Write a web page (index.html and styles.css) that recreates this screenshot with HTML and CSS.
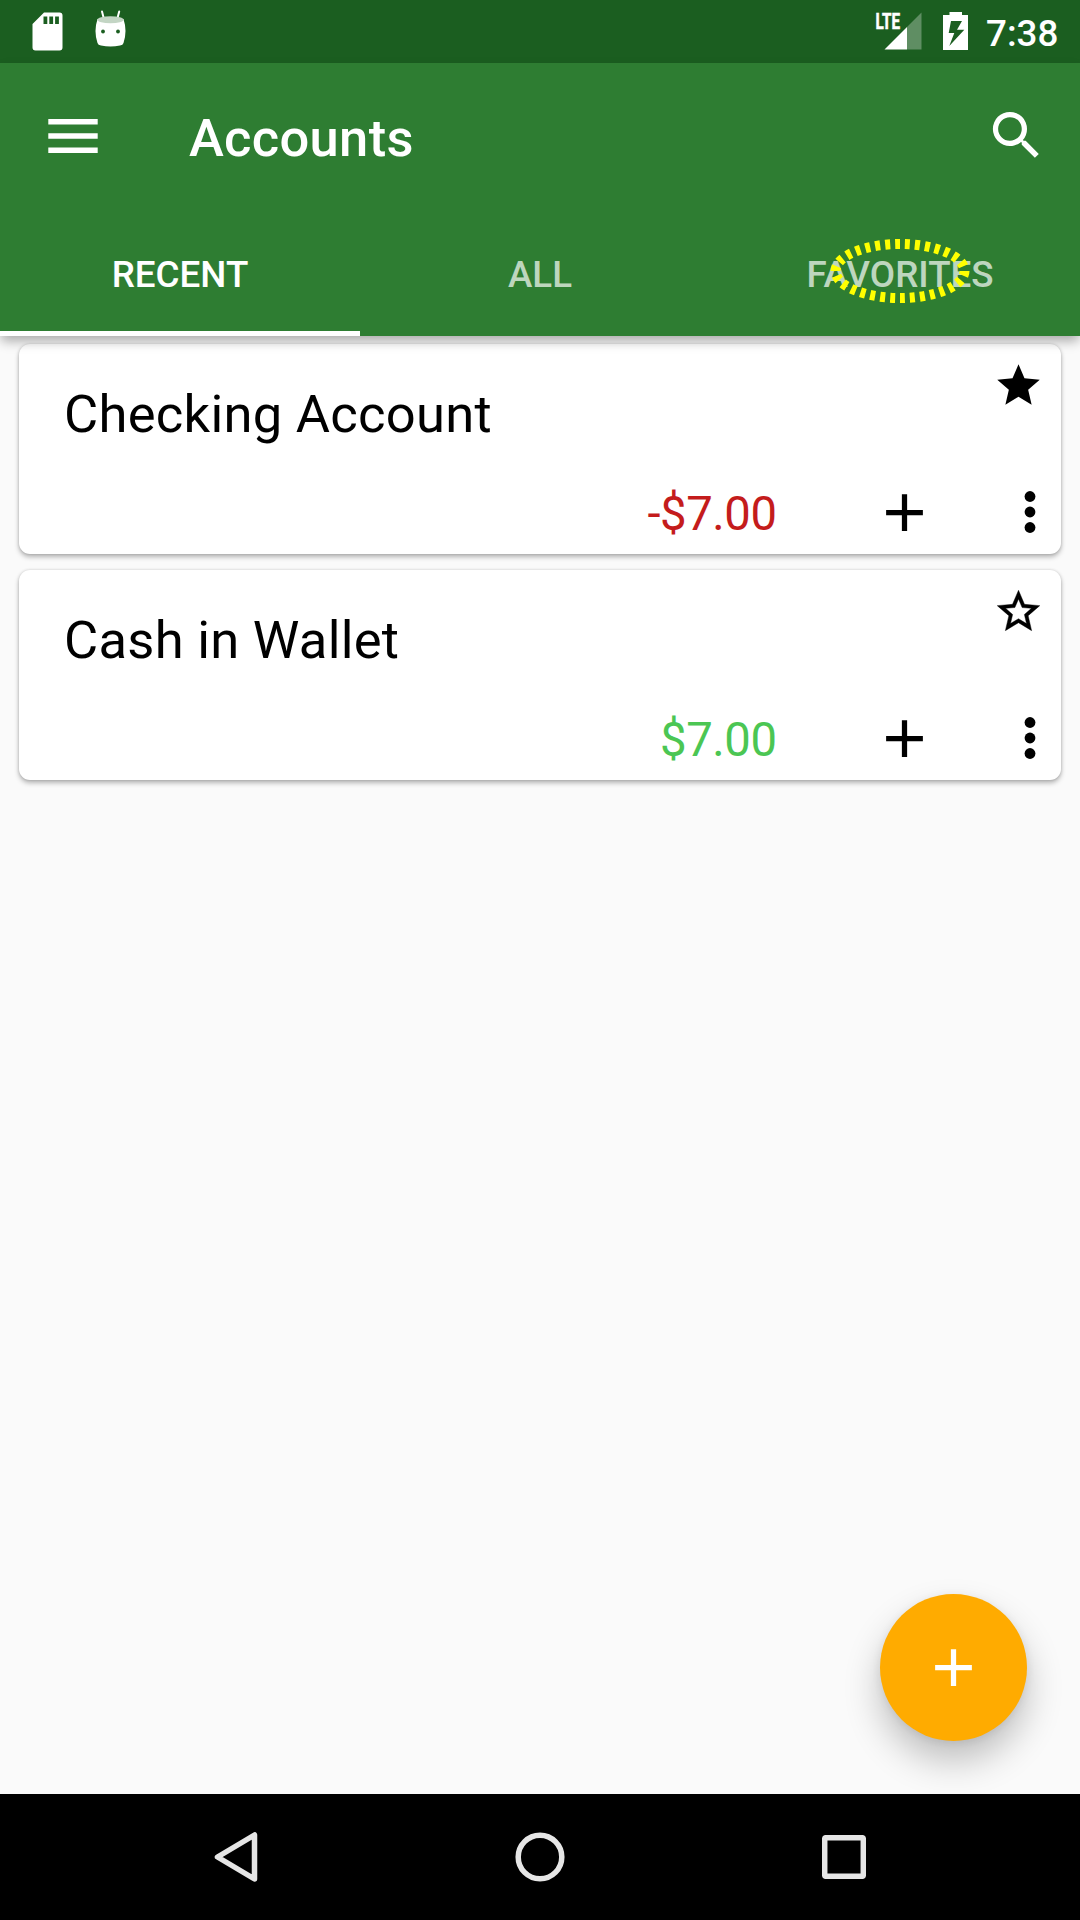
FILE: index.html
```html
<!DOCTYPE html>
<html lang="en">
<head>
<meta charset="utf-8">
<title>Accounts</title>
<link rel="stylesheet" href="styles.css">
</head>
<body>
<div class="screen">
  <div class="status-bar">
    <svg class="status-icons" width="140" height="63" viewBox="0 0 140 63">
      <path fill="#fff" fill-rule="evenodd" d="M44 12.5H59.500Q62.500 12.500 62.500 15.500V47.500Q62.500 50.500 59.500 50.500H35.500Q32.500 50.500 32.500 47.500V24ZM43.500 16.500V24H47.300V16.500ZM49.300 16.500V24H53.100V16.500ZM55.100 16.500V24H58.900V16.500Z"/>
      <path d="M102 11.500L103.800 18.500M119.200 11.500L117.400 18.500" stroke="#fff" stroke-width="2" stroke-linecap="round"/>
      <path fill="#fff" d="M97.500 19Q93.500 31 97.500 43Q98 45 101 45.600Q110.500 47.600 120 45.600Q123 45 123.500 43Q127.500 31 123.500 19Z"/>
      <ellipse cx="110.500" cy="19.700" rx="13.200" ry="3.500" fill="#c3d5c4"/>
      <circle cx="103" cy="31.500" r="1.900" fill="#1b5e20"/>
      <circle cx="118" cy="31.500" r="1.900" fill="#1b5e20"/>
    </svg>
    <div class="status-right">
      <svg width="100" height="63" viewBox="870 0 100 63">
        <text class="lte" x="875.500" y="29" textLength="24.500" lengthAdjust="spacingAndGlyphs">LTE</text>
        <path fill="#fff" d="M884.500 49.500L907 27V49.500Z"/>
        <path fill="#fff" fill-opacity=".3" d="M907 27L921.500 12.500V49.500H907Z"/>
        <path fill="#fff" fill-rule="evenodd" d="M949.500 12H962V15H968V50H943V15H949.500ZM951 21L948.700 33H954.300L949.300 46L964.300 29.700H957L962 21Z"/>
      </svg>
      <span class="clock">7:38</span>
    </div>
  </div>

  <header class="app-bar">
    <div class="toolbar">
      <svg class="menu-icon" width="50" height="34" viewBox="0 0 50 34"><path fill="#fff" d="M.3 0H49.700V5.500H.3ZM.3 14.300H49.700V19.800H.3ZM.3 28.500H49.700V34H.3Z"/></svg>
      <h1 class="title">Accounts</h1>
      <svg class="search-icon" width="63" height="63" viewBox="0 0 24 24"><path fill="#fff" d="M15.500 14h-.79l-.28-.27A6.471 6.471 0 0 0 16 9.500 6.500 6.500 0 1 0 9.500 16c1.610 0 3.090-.59 4.230-1.570l.27.28v.79l5 4.990L20.490 19l-4.990-5zm-6 0C7.010 14 5 11.990 5 9.500S7.010 5 9.500 5 14 7.010 14 9.500 11.990 14 9.500 14z"/></svg>
    </div>
    <nav class="tabs">
      <div class="tab active">RECENT</div>
      <div class="tab">ALL</div>
      <div class="tab">FAVORITES
        <svg class="highlight" width="144" height="68" viewBox="0 0 144 68"><ellipse cx="72" cy="34" rx="64.500" ry="27" fill="none" stroke="#ff0" stroke-width="10" pathLength="300" stroke-dasharray="5 5"/></svg>
      </div>
    </nav>
  </header>

  <main class="accounts">
    <section class="card">
      <div class="card-top">
        <h2 class="name">Checking Account</h2>
        <svg width="51" height="51" viewBox="0 0 24 24"><path d="M12 17.270L18.180 21l-1.640-7.030L22 9.240l-7.190-.61L12 2 9.190 8.630 2 9.240l5.460 4.730L5.820 21z"/></svg>
      </div>
      <div class="card-bottom">
        <span class="amount negative">-$7.00</span>
        <svg class="add" width="63" height="63" viewBox="0 0 24 24"><path d="M19 13h-6v6h-2v-6H5v-2h6V5h2v6h6z"/></svg>
        <svg class="more" width="12" height="44" viewBox="0 0 12 44"><circle cx="6" cy="6.500" r="5.400"/><circle cx="6" cy="22" r="5.400"/><circle cx="6" cy="37.500" r="5.400"/></svg>
      </div>
    </section>
    <section class="card">
      <div class="card-top">
        <h2 class="name">Cash in Wallet</h2>
        <svg width="51" height="51" viewBox="0 0 24 24"><path d="M22 9.240l-7.190-.62L12 2 9.190 8.630 2 9.240l5.460 4.730L5.820 21 12 17.270 18.180 21l-1.630-7.030L22 9.240zM12 15.400l-3.760 2.270 1-4.280-3.320-2.880 4.380-.38L12 6.100l1.710 4.040 4.380.38-3.320 2.880 1 4.280L12 15.400z" stroke="#000" stroke-width=".2"/></svg>
      </div>
      <div class="card-bottom">
        <span class="amount positive">$7.00</span>
        <svg class="add" width="63" height="63" viewBox="0 0 24 24"><path d="M19 13h-6v6h-2v-6H5v-2h6V5h2v6h6z"/></svg>
        <svg class="more" width="12" height="44" viewBox="0 0 12 44"><circle cx="6" cy="6.500" r="5.400"/><circle cx="6" cy="22" r="5.400"/><circle cx="6" cy="37.500" r="5.400"/></svg>
      </div>
    </section>
    <div class="fab"><svg width="63" height="63" viewBox="0 0 24 24"><path fill="#fff" d="M19 13h-6v6h-2v-6H5v-2h6V5h2v6h6z"/></svg></div>
  </main>

  <footer class="nav-bar">
    <svg width="44" height="52" viewBox="0 0 44 52"><path d="M40.500 4V48L3.500 26Z"/></svg>
    <svg width="50" height="50" viewBox="0 0 50 50"><circle cx="25" cy="25" r="21.800"/></svg>
    <svg width="44" height="44" viewBox="0 0 44 44"><rect x="2.700" y="2.700" width="38.600" height="38.600" rx="1"/></svg>
  </footer>
</div>
</body>
</html>
```
FILE: styles.css
```css
* { box-sizing: border-box; }
body { margin: 0; font-family: Roboto, "Liberation Sans", sans-serif; }
svg { display: block; flex: none; }
h1, h2 { margin: 0; }

.screen {
  width: 1080px;
  height: 1920px;
  display: flex;
  flex-direction: column;
  background: #fafafa;
  overflow: hidden;
}

.status-bar {
  height: 63px;
  flex: none;
  display: flex;
  justify-content: space-between;
  background: #1b5e20;
}
.status-right { display: flex; width: 210px; }
.lte { font-size: 21.500px; font-weight: 700; fill: #fff; stroke: #fff; stroke-width: .6px; }
.clock {
  margin-left: 16px;
  font-size: 36.750px;
  line-height: 68px;
  font-weight: 500;
  color: #fff;
}

.app-bar {
  height: 273px;
  flex: none;
  position: relative;
  z-index: 1;
  background: #2e7d32;
  color: #fff;
  box-shadow: 0 6px 11px -1px rgba(0, 0, 0, .32);
}
.toolbar {
  height: 147px;
  display: flex;
  align-items: center;
  padding: 0 32px 0 48px;
}
.menu-icon { margin-bottom: 2px; }
.title {
  flex: 1;
  margin-left: 91px;
  padding-top: 3px;
  font-size: 52.500px;
  line-height: 62px;
  font-weight: 500;
  letter-spacing: .3px;
}
.search-icon { margin-bottom: 3px; }

.tabs {
  height: 126px;
  display: grid;
  grid-template-columns: repeat(3, 1fr);
}
.tab {
  position: relative;
  display: flex;
  align-items: center;
  justify-content: center;
  padding-top: 8px;
  border-bottom: 5px solid transparent;
  font-size: 36.750px;
  font-weight: 500;
  color: rgba(255, 255, 255, .7);
}
.tab.active { color: #fff; border-bottom-color: #fff; }
.highlight { position: absolute; left: 108px; top: 27px; }

.accounts {
  flex: 1;
  position: relative;
  display: flex;
  flex-direction: column;
  gap: 16px;
  padding: 8px 19px;
}
.card {
  height: 210px;
  border-radius: 11px;
  background: #fff;
  box-shadow: 0 3px 5px rgba(0, 0, 0, .28), 0 0 3px rgba(0, 0, 0, .16);
}
.card-top {
  height: 126px;
  display: flex;
  justify-content: space-between;
  padding: 16px 17px 0 45px;
}
.name {
  padding-top: 23px;
  font-size: 52.500px;
  line-height: 62px;
  font-weight: 400;
  letter-spacing: .28px;
}
.card-bottom {
  height: 84px;
  display: flex;
  align-items: center;
  justify-content: flex-end;
  padding-right: 25px;
}
.amount { font-size: 47.250px; line-height: 56px; padding-top: 3px; letter-spacing: -.45px; }
.negative { color: #c41c1c; }
.positive { color: #4bc653; }
.add { margin-left: 96px; }
.more { margin-left: 88.500px; }

.fab {
  position: absolute;
  right: 53px;
  bottom: 53px;
  width: 147px;
  height: 147px;
  border-radius: 50%;
  display: flex;
  align-items: center;
  justify-content: center;
  background: #ffab00;
  box-shadow: 0 20px 36px rgba(0, 0, 0, .24), 0 2px 10px rgba(0, 0, 0, .08);
}

.nav-bar {
  position: relative;
  height: 126px;
  flex: none;
  display: flex;
  align-items: center;
  justify-content: space-between;
  padding: 0 214px;
  background: #000;
}
.nav-bar svg {
  fill: none;
  stroke: #e6e6e6;
  stroke-width: 5.500;
  stroke-linejoin: round;
}
```
